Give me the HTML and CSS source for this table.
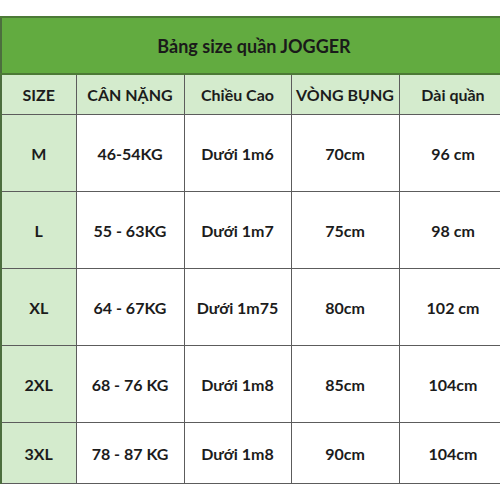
FILE: index.html
```html
<!DOCTYPE html>
<html lang="vi">
<head>
<meta charset="utf-8">
<link rel="stylesheet" href="styles.css">
</head>
<body>
<div class="page">
<table class="size-table">
  <colgroup>
    <col class="c1"><col class="c2"><col class="c3"><col class="c4"><col class="c5">
  </colgroup>
  <thead>
    <tr class="title-row"><th colspan="5">Bảng size quần JOGGER</th></tr>
    <tr class="head-row">
      <th>SIZE</th><th>CÂN NẶNG</th><th>Chiều Cao</th><th>VÒNG BỤNG</th><th>Dài quần</th>
    </tr>
  </thead>
  <tbody>
    <tr class="r"><th>M</th><td>46-54KG</td><td>Dưới 1m6</td><td>70cm</td><td>96 cm</td></tr>
    <tr class="r"><th>L</th><td>55 - 63KG</td><td>Dưới 1m7</td><td>75cm</td><td>98 cm</td></tr>
    <tr class="r"><th>XL</th><td>64 - 67KG</td><td>Dưới 1m75</td><td>80cm</td><td>102 cm</td></tr>
    <tr class="r"><th>2XL</th><td>68 - 76 KG</td><td>Dưới 1m8</td><td>85cm</td><td>104cm</td></tr>
    <tr class="r last"><th>3XL</th><td>78 - 87 KG</td><td>Dưới 1m8</td><td>90cm</td><td>104cm</td></tr>
  </tbody>
</table>
</div>
</body>
</html>
```
FILE: styles.css
```css
html, body {
  margin: 0;
  padding: 0;
  background: #ffffff;
  overflow: hidden;
}
.page {
  width: 500px;
  height: 500px;
  overflow: hidden;
  padding-top: 16px;
  box-sizing: border-box;
}
.size-table {
  border-collapse: collapse;
  table-layout: fixed;
  width: 506px;
  font-family: "Lato", "Open Sans", sans-serif;
  font-weight: 700;
  color: #1c1c1c;
  font-size: 16px;
}
.c1 { width: 75px; }
.c2 { width: 108px; }
.c3 { width: 107px; }
.c4 { width: 108px; }
.c5 { width: 108px; }
.size-table th, .size-table td {
  border: 1.5px solid #5c5c5c;
  text-align: center;
  vertical-align: middle;
  padding: 0;
  font-weight: 700;
}
.title-row th {
  background: #62ab40;
  height: 55px;
  font-size: 18px;
  border: 2px solid #4c7a36;
  color: #1a1a1a;
}
.head-row th {
  background: #d4ebcd;
  height: 39px;
  font-size: 16px;
}
.r th {
  background: #d4ebcd;
}
.r th, .r td {
  height: 76px;
}
.r.last th, .r.last td {
  height: 60px;
}
.size-table tr > :first-child {
  border-left: 2px solid #4c6e3e;
}
```
